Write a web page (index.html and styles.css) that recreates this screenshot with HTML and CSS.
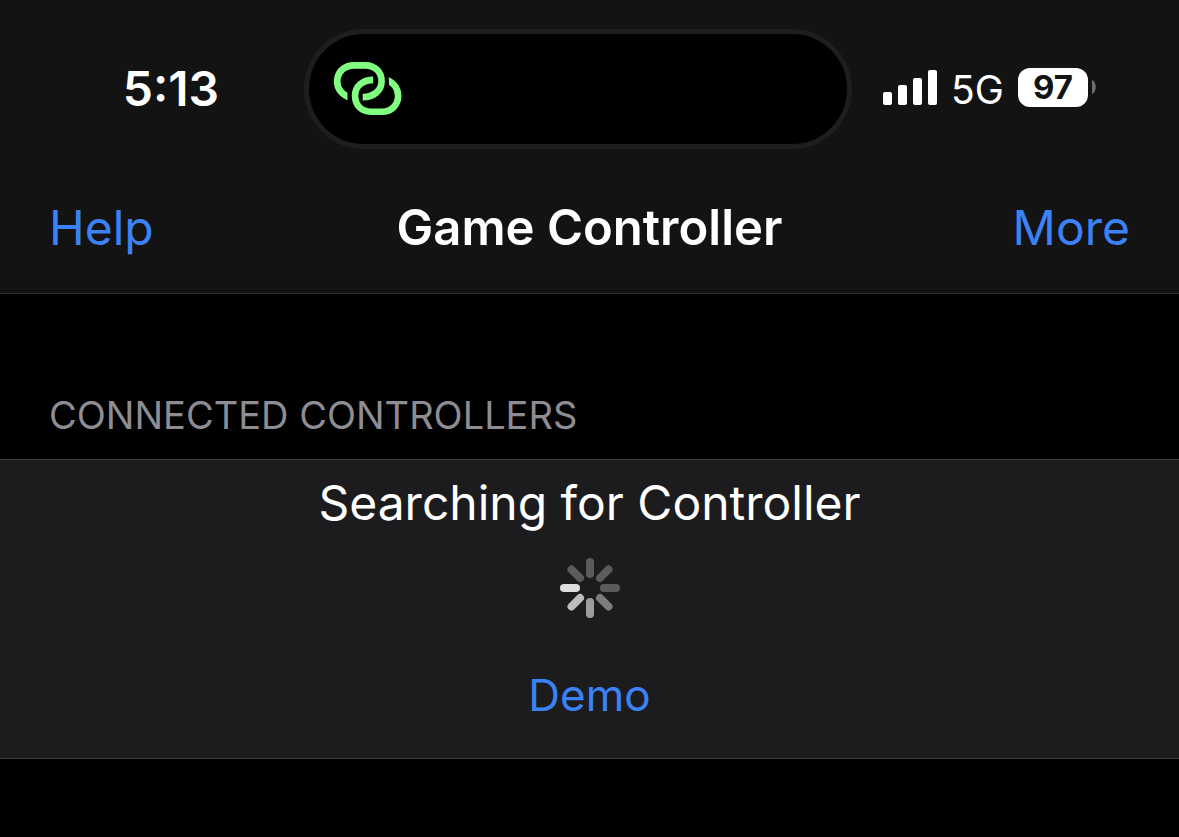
FILE: index.html
```html
<!DOCTYPE html>
<html lang="en">
<head>
<meta charset="utf-8">
<meta name="viewport" content="width=device-width, initial-scale=1">
<title>Game Controller</title>
<link rel="stylesheet" href="styles.css">
</head>
<body>
<header class="top">
  <div class="status">
    <time class="clock">5:13</time>
    <div class="island">
      <svg class="link-icon" viewBox="132 126 204 160" role="img" aria-label="Personal hotspot">
        <defs>
          <clipPath id="upper"><path d="M120 110H300V245H210V205H172V245H120Z"/></clipPath>
          <clipPath id="lower"><path d="M180 165H250V200H297V165H350V300H180Z"/></clipPath>
        </defs>
        <path clip-path="url(#upper)" d="M184 236C157 226 141 208 141 185C141 155 163 136 192 136H226C256 136 275 157 275 184C275 212 252 232 218 232"/>
        <path clip-path="url(#lower)" d="M251 180C217 180 195 200 195 228C195 256 214 276 243 276H276C306 276 325 255 325 228C325 205 310 186 284 178"/>
      </svg>
    </div>
    <div class="indicators">
      <svg class="signal" viewBox="0 0 54 35" role="img" aria-label="Signal strength">
        <rect x="0" y="22" width="9" height="13" rx="2"/>
        <rect x="15" y="15" width="9" height="20" rx="2"/>
        <rect x="30" y="8" width="9" height="27" rx="2"/>
        <rect x="45" y="0" width="9" height="35" rx="2"/>
      </svg>
      <span class="network">5G</span>
      <span class="battery"><span class="level">97</span><svg class="nub" viewBox="0 0 4 14" aria-hidden="true"><path d="M0 0C5 2 5 12 0 14Z"/></svg></span>
    </div>
  </div>
  <nav class="bar">
    <a class="action" href="#help">Help</a>
    <h1 class="title">Game Controller</h1>
    <a class="action end" href="#more">More</a>
  </nav>
</header>
<main>
  <h2 class="section">CONNECTED CONTROLLERS</h2>
  <section class="panel">
    <p class="message">Searching for Controller</p>
    <svg class="spinner" viewBox="-30 -30 60 60" role="img" aria-label="Searching">
      <path stroke="#5b5b5d" d="M0-26V-14M18.5-18.5L10-10M26 0H14M-18.5-18.5L-10-10"/>
      <path stroke="#7d7d7f" d="M18.5 18.5L10 10"/>
      <path stroke="#9d9d9f" d="M0 26V14"/>
      <path stroke="#bdbdbf" d="M-18.5 18.5L-10 10"/>
      <path stroke="#dededf" d="M-26 0H-14"/>
    </svg>
    <button class="demo" type="button">Demo</button>
  </section>
</main>
</body>
</html>
```
FILE: styles.css
```css
* { box-sizing: border-box; }
body {
  margin: 0;
  background: #000;
  color: #fff;
  font-family: Inter, "Liberation Sans", sans-serif;
}
h1, h2, p { margin: 0; }
.top {
  background: #131313;
  border-bottom: 1px solid #2b2b2c;
  padding: 29px 0 35px;
}
.status {
  display: grid;
  grid-template-columns: 304fr 548fr 327fr;
  align-items: center;
}
.clock {
  padding-left: 38px;
  text-align: center;
  font-size: 48px;
  font-weight: 600;
  line-height: 60px;
}
.island {
  height: 120px;
  border: 5px solid #1e1e1e;
  border-radius: 60px;
  background: #000;
  display: flex;
  align-items: center;
  padding: 0 0 2px 25px;
}
.link-icon {
  width: 68px;
  height: 53px;
  fill: none;
  stroke: #80ff80;
  stroke-width: 20;
}
.indicators {
  display: flex;
  align-items: center;
  justify-content: center;
  gap: 14px;
  padding: 0 52px 4px 0;
}
.signal { width: 54px; height: 35px; fill: #fff; }
.network { padding-top: 6px; font-size: 39px; line-height: 48px; }
.battery { display: flex; align-items: center; gap: 4px; }
.level {
  width: 70px;
  border-radius: 12px;
  background: #fff;
  color: #131313;
  font-size: 33px;
  font-weight: 700;
  line-height: 39px;
  text-align: center;
}
.nub { width: 4px; height: 14px; fill: #6d6d6d; }
.bar {
  display: grid;
  grid-template-columns: 1fr auto 1fr;
  align-items: center;
  padding: 49px 49px 0;
}
.action {
  color: #3b82f7;
  font-size: 48px;
  line-height: 60px;
  text-decoration: none;
}
.end { text-align: right; }
.title { font-size: 49px; font-weight: 600; line-height: 60px; }
.section {
  padding: 96px 49px 19px;
  color: #8d8d93;
  font-size: 38px;
  font-weight: 400;
  line-height: 50px;
}
.panel {
  display: flex;
  flex-direction: column;
  align-items: center;
  background: #1c1c1e;
  border: solid #3b3b3e;
  border-width: 1px 0;
  padding: 12px 49px 33px;
}
.message { font-size: 48px; line-height: 62px; }
.spinner {
  width: 60px;
  height: 60px;
  margin: 24px 0 47px;
  fill: none;
  stroke-width: 8;
  stroke-linecap: round;
}
.demo {
  border: 0;
  padding: 0;
  background: none;
  color: #3b82f7;
  font: inherit;
  font-size: 44px;
  line-height: 60px;
}
```
